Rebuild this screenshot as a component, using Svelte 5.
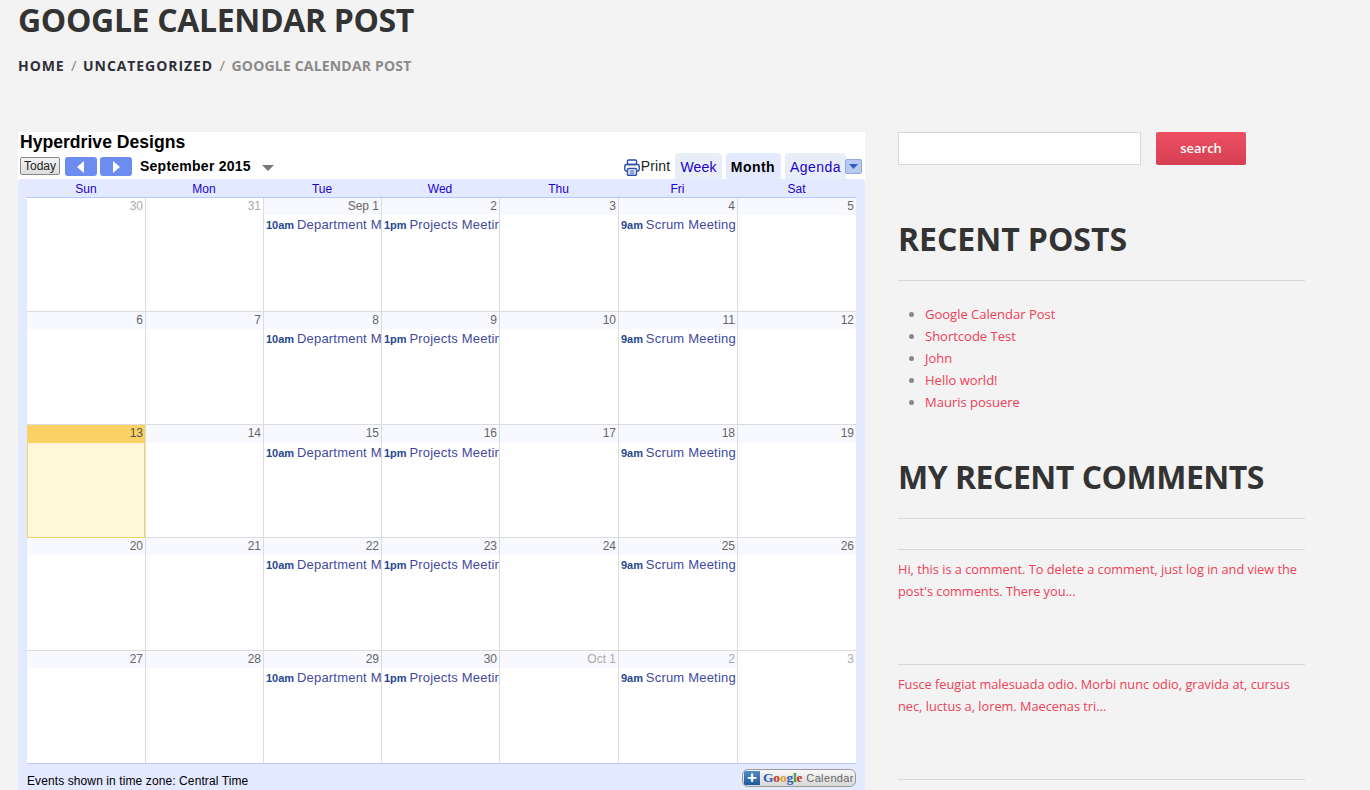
<script>
  const weekdays = ['Sun', 'Mon', 'Tue', 'Wed', 'Thu', 'Fri', 'Sat'];

  const weeks = [
    ['30', '31', 'Sep 1', '2', '3', '4', '5'],
    ['6', '7', '8', '9', '10', '11', '12'],
    ['13', '14', '15', '16', '17', '18', '19'],
    ['20', '21', '22', '23', '24', '25', '26'],
    ['27', '28', '29', '30', 'Oct 1', '2', '3']
  ];

  const events = {
    2: { time: '10am', name: 'Department Meeting' },
    3: { time: '1pm', name: 'Projects Meeting' },
    5: { time: '9am', name: 'Scrum Meeting' }
  };

  function isMuted(w, d) {
    return (w === 0 && d < 2) || (w === 4 && d > 3);
  }

  const posts = ['Google Calendar Post', 'Shortcode Test', 'John', 'Hello world!', 'Mauris posuere'];
  const comments = [
    "Hi, this is a comment. To delete a comment, just log in and view the post's comments. There you...",
    'Fusce feugiat malesuada odio. Morbi nunc odio, gravida at, cursus nec, luctus a, lorem. Maecenas tri...'
  ];
</script>

<div class="page">
  <h1>GOOGLE CALENDAR POST</h1>
  <div class="crumbs">
    <a href="#home">HOME</a><span class="sep">/</span><a href="#cat">UNCATEGORIZED</a><span class="sep">/</span><span class="current">GOOGLE CALENDAR POST</span>
  </div>

  <div class="main">
    <div class="cal">
      <div class="cal-title">Hyperdrive Designs</div>
      <div class="toolbar">
        <button class="today">Today</button>
        <button class="nav" aria-label="Previous"><svg width="8" height="12" viewBox="0 0 8 12"><path d="M7 0v12L0 6z" fill="#fff"/></svg></button>
        <button class="nav" aria-label="Next"><svg width="8" height="12" viewBox="0 0 8 12"><path d="M1 0v12l7-6z" fill="#fff"/></svg></button>
        <span class="range">September 2015</span>
        <svg class="caret" width="12" height="6" viewBox="0 0 12 6"><path d="M0 0h12L6 6z" fill="#777"/></svg>
        <div class="views">
          <svg class="printer" width="16" height="17" viewBox="0 0 16 17" fill="none" stroke="#2a4fa8" stroke-width="1.4">
            <rect x="3.5" y="1" width="9" height="4.5" rx="1"/>
            <rect x="0.8" y="5.5" width="14.4" height="6.5" rx="1.5"/>
            <rect x="3.5" y="9.5" width="9" height="6.7" rx="1" fill="#fff"/>
            <path d="M5.5 12h5M5.5 14h5" stroke-width="1"/>
          </svg>
          <span class="print">Print</span>
          <span class="tab tab-first">Week</span>
          <span class="tab active">Month</span>
          <span class="tab tab-agenda">Agenda</span>
          <span class="menu"><svg width="9" height="5" viewBox="0 0 9 5"><path d="M0 0h9L4.5 5z" fill="#2f5fc4"/></svg></span>
        </div>
      </div>

      <div class="panel">
        <div class="days">
          {#each weekdays as day}
            <div class="day">{day}</div>
          {/each}
        </div>
        <div class="grid">
          {#each weeks as week, w}
            <div class="week" class:tall={week.includes('13')}>
              {#each week as date, d}
                <div class="cell" class:today-cell={date === '13'}>
                  <div class="date" class:muted={isMuted(w, d)} class:plain={isMuted(w, d) && date !== 'Oct 1' && date !== '2'}>{date}</div>
                  {#if events[d]}
                    <div class="event"><b>{events[d].time}</b> {events[d].name}</div>
                  {/if}
                </div>
              {/each}
            </div>
          {/each}
        </div>
        <div class="cal-foot">
          <span>Events shown in time zone: Central Time</span>
          <span class="gcal">
            <span class="plus">+</span>
            <span class="logo"><i class="b">G</i><i class="r">o</i><i class="y">o</i><i class="b">g</i><i class="g">l</i><i class="r">e</i></span>
            <span class="gcal-word">Calendar</span>
          </span>
        </div>
      </div>
    </div>

    <aside class="side">
      <div class="search">
        <input type="text" aria-label="Search" />
        <button>search</button>
      </div>

      <h2 class="recent">RECENT POSTS</h2>
      <ul>
        {#each posts as post}
          <li><a href="#post">{post}</a></li>
        {/each}
      </ul>

      <h2 class="comments-head">MY RECENT COMMENTS</h2>
      {#each comments as comment}
        <div class="comment"><a href="#comment">{comment}</a></div>
      {/each}
      <div class="comment"></div>
    </aside>
  </div>
</div>

<style>
  :global(body) {
    margin: 0;
    background: #f3f3f3;
    overflow: hidden;
  }

  .page {
    height: 790px;
    overflow: hidden;
    padding: 0 18px;
    box-sizing: border-box;
    font-family: "Open Sans", "Noto Sans", sans-serif;
    color: #333;
  }

  h1 {
    margin: 0;
    padding-top: 1px;
    font-size: 32px;
    line-height: 38px;
    font-weight: 700;
    letter-spacing: -0.35px;
    color: #333;
  }

  .crumbs {
    margin-top: 16px;
    height: 21px;
    font-size: 14px;
    line-height: 20px;
    font-weight: 700;
  }
  .crumbs a {
    color: #2f2f38;
    text-decoration: none;
    letter-spacing: 0.92px;
  }
  .sep {
    margin: 0 6.5px;
    color: #888;
    font-weight: 400;
    font-size: 15px;
  }
  .current {
    color: #8a8a8a;
    letter-spacing: 0.18px;
  }

  .main {
    display: flex;
    gap: 33px;
    margin-top: 56px;
  }

  .cal {
    width: 847px;
    flex: none;
    background: #fff;
    font-family: "Liberation Sans", Arial, sans-serif;
    font-size: 13px;
    color: #000;
  }
  .cal-title {
    height: 21px;
    padding-left: 2px;
    font-size: 17.6px;
    line-height: 20px;
    font-weight: 700;
  }

  .toolbar {
    display: flex;
    align-items: flex-start;
    height: 26px;
    padding: 0 2px;
  }
  .today {
    width: 40px;
    height: 18px;
    margin: 4px 5px 0 0;
    padding: 0;
    border: 1px solid #888;
    border-radius: 2px;
    background: linear-gradient(#f4f4f4, #dcdcdc);
    font: 12px "Liberation Sans", Arial, sans-serif;
    color: #222;
  }
  .nav {
    display: flex;
    align-items: center;
    justify-content: center;
    width: 32px;
    height: 19px;
    margin: 4px 3px 0 0;
    padding: 0;
    border: 0;
    border-radius: 3px;
    background: #6c8cf0;
  }
  .range {
    margin: 5px 0 0 5px;
    font-size: 14px;
    line-height: 17px;
    font-weight: 700;
    letter-spacing: 0.25px;
  }
  .caret {
    margin: 12px 0 0 11px;
  }

  .views {
    display: flex;
    align-items: flex-end;
    height: 26px;
    margin-left: auto;
    margin-right: 1px;
    font-size: 14px;
  }
  .printer {
    margin: 0 1px 3px 0;
  }
  .print {
    line-height: 18px;
    margin-bottom: 4px;
    letter-spacing: 0.2px;
    color: #222;
  }
  .tab {
    display: block;
    height: 26px;
    padding: 0 5px;
    margin-left: 4px;
    border-radius: 4px 4px 0 0;
    background: #e8eef7;
    color: #2200cc;
    line-height: 29px;
    letter-spacing: 0.2px;
  }
  .tab-first {
    margin-left: 5px;
  }
  .tab-agenda {
    letter-spacing: 0.45px;
  }
  .active {
    padding-right: 6px;
    background: #e3e9ff;
    color: #000;
    font-weight: 700;
    letter-spacing: 0.45px;
  }
  .menu {
    display: flex;
    align-items: center;
    justify-content: center;
    width: 17px;
    height: 15px;
    margin: 0 0 5px -1px;
    border: 1px solid #8fa8e0;
    border-radius: 2px;
    box-sizing: border-box;
    background: #b9c9f2;
    position: relative;
  }

  .panel {
    height: 621px;
    padding: 0 9px;
    border-radius: 4px 4px 0 0;
    background: #e3e9ff;
  }
  .days {
    display: grid;
    grid-template-columns: 118px 118px 118px 118px 119px 119px 119px;
    height: 18px;
  }
  .day {
    text-align: center;
    font-size: 12px;
    line-height: 21px;
    color: #2200cc;
  }

  .grid {
    border-top: 1px solid #b7c8ff;
    border-bottom: 1px solid #b7c8ff;
    background: #fff;
  }
  .week {
    display: grid;
    grid-template-columns: 119px 118px 118px 118px 119px 119px 118px;
    box-sizing: border-box;
    height: 113px;
    border-top: 1px solid #dcdcdc;
  }
  .week:first-child {
    border-top: 0;
  }
  .cell {
    min-width: 0;
    overflow: hidden;
    border-right: 1px solid #dcdcdc;
  }
  .cell:last-child {
    border-right: 0;
  }
  .date {
    height: 17px;
    padding-right: 2px;
    background: #f8f9ff;
    text-align: right;
    font-size: 12px;
    line-height: 17px;
    color: #666;
  }
  .tall .date {
    height: 18px;
  }
  .date.muted {
    color: #aaa;
  }
  .date.plain {
    background: #fff;
  }
  .event {
    height: 17px;
    padding: 1px 0 0 2px;
    white-space: nowrap;
    font-size: 13px;
    line-height: 18px;
    letter-spacing: 0.2px;
    color: #3f4a9c;
  }
  .event b {
    margin-right: -1px;
    font-size: 11px;
    letter-spacing: 0;
    color: #27478f;
  }
  .today-cell {
    position: relative;
    z-index: 1;
    margin-bottom: -1px;
    background: #fff7d7;
    box-shadow: inset 1px 0 #fad163, inset -1px 0 #fad163, inset 0 -1px #fad163;
  }
  .today-cell .date {
    background: #fad163;
    color: #555;
  }

  .cal-foot {
    display: flex;
    justify-content: space-between;
    align-items: center;
    height: 26px;
    font-size: 12px;
    letter-spacing: 0.1px;
  }
  .cal-foot > span:first-child {
    padding-top: 8px;
  }
  .gcal {
    display: flex;
    align-items: center;
    box-sizing: border-box;
    width: 114px;
    height: 18px;
    margin-top: 1px;
    padding-left: 1px;
    border: 1px solid #999;
    border-radius: 6px;
    background: linear-gradient(#f8f8f8, #d8d8d8);
    overflow: hidden;
    letter-spacing: 0;
  }
  .plus {
    width: 16px;
    height: 14px;
    flex: none;
    background: linear-gradient(#4f8cc8, #1f5a9c);
    color: #fff;
    text-align: center;
    font-size: 17px;
    line-height: 14px;
    font-weight: 700;
  }
  .logo {
    flex: none;
    margin-left: 3px;
    font-family: "Liberation Serif", serif;
    font-size: 13.5px;
    font-weight: 700;
    letter-spacing: -0.2px;
  }
  .logo i {
    font-style: normal;
  }
  .b { color: #2a5fb8; }
  .r { color: #cc3322; }
  .y { color: #e0a020; }
  .g { color: #3a9a3a; }
  .gcal-word {
    flex: none;
    margin-left: 4px;
    font-size: 11px;
    letter-spacing: 0.35px;
    color: #666;
  }

  .side {
    width: 407px;
    flex: none;
    font-family: "Open Sans", "Noto Sans", sans-serif;
    font-size: 13px;
  }
  .search {
    display: flex;
    gap: 15px;
  }
  .search input {
    width: 243px;
    height: 33px;
    box-sizing: border-box;
    padding: 0;
    border: 1px solid #d8d8d8;
    background: #fff;
  }
  .search button {
    width: 90px;
    height: 33px;
    padding: 0 0 1px;
    border: 0;
    border-radius: 2px;
    background: linear-gradient(#ee4f63, #d63f53);
    color: #fff;
    font: 600 13px "Open Sans", sans-serif;
  }

  h2 {
    margin: 0;
    font-size: 32px;
    line-height: 40px;
    font-weight: 700;
    color: #333;
    border-bottom: 1px solid #d8d8d8;
    padding-bottom: 21px;
  }
  .recent {
    margin-top: 54px;
    letter-spacing: -0.05px;
  }
  ul {
    margin: 22px 0 0;
    padding: 0 0 0 27px;
    color: #888;
    line-height: 22px;
  }
  ul a,
  .comment a {
    color: #ee4056;
    text-decoration: none;
  }
  .comments-head {
    margin-top: 44px;
    letter-spacing: -0.5px;
  }
  .comment {
    height: 106px;
    padding-top: 8px;
    border-top: 1px solid #d8d8d8;
    line-height: 22px;
    font-size: 12.75px;
  }
  .comments-head + .comment {
    margin-top: 30px;
  }
</style>
